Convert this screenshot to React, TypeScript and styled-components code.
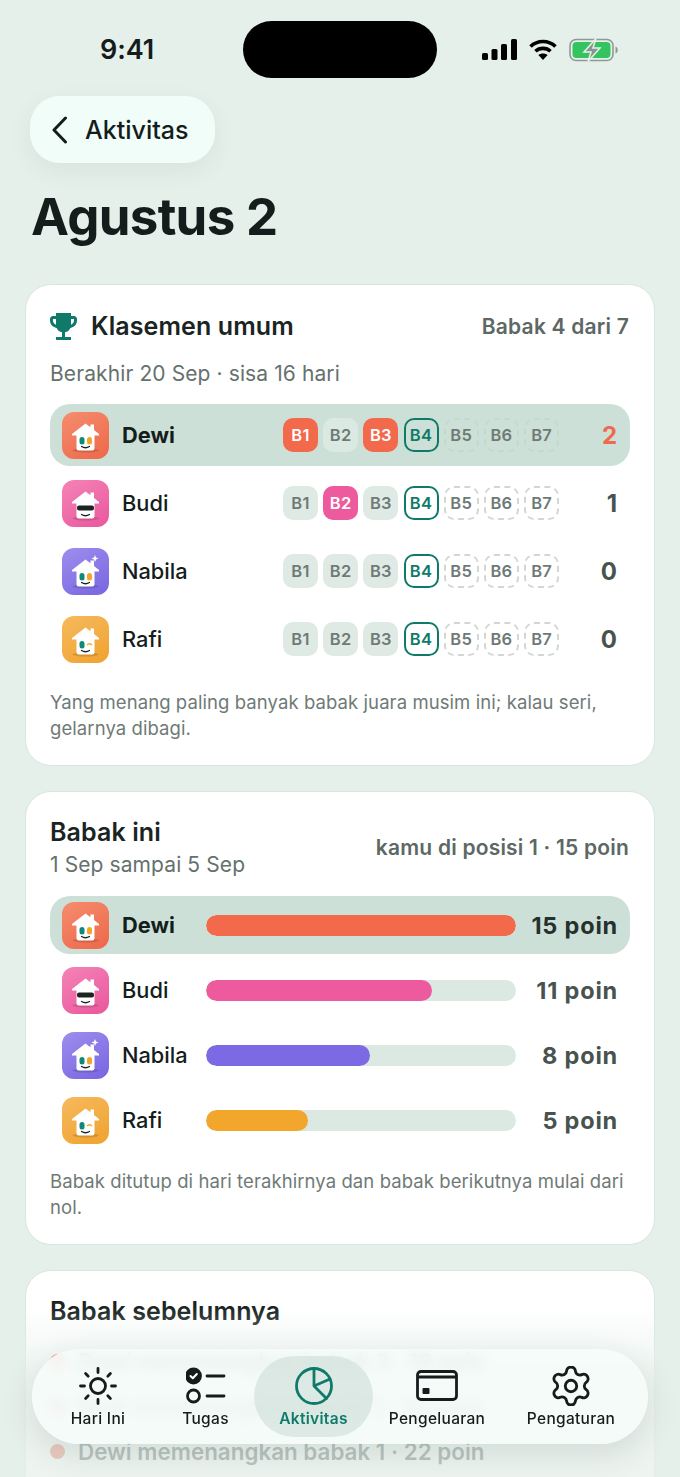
import React from "react";
import styled, { createGlobalStyle } from "styled-components";

const Global = createGlobalStyle`
  html, body { margin: 0; padding: 0; background: #e6f0eb; }
  body { font-family: Inter, "Noto Sans", "Liberation Sans", sans-serif; color: #141d1c; }
  * { box-sizing: border-box; }
`;

const Phone = styled.div`
  position: relative;
  width: 680px;
  height: 1477px;
  overflow: hidden;
  background: #e6f0eb;
`;
const StatusBar = styled.div`
  display: grid;
  grid-template-columns: 243px 194px 243px;
  height: 96px;
  padding-top: 21px;
`;
const Clock = styled.div`
  font-size: 27px;
  font-weight: 600;
  padding-left: 100px;
  line-height: 57px;
  letter-spacing: -0.1px;
`;
const Island = styled.div`
  height: 57px;
  border-radius: 29px;
  background: #000;
`;
const StatusIcons = styled.div`
  display: flex;
  align-items: center;
  gap: 12px;
  height: 57px;
  padding-left: 45px;
`;
const BackPill = styled.div`
  display: inline-flex;
  align-items: center;
  gap: 16px;
  height: 67px;
  margin-left: 30px;
  padding: 0 27px 0 21px;
  border-radius: 30px;
  background: #f1fdf8;
  box-shadow: 0 8px 24px rgba(40, 70, 60, 0.07);
  font-size: 25px;
  font-weight: 500;
`;
const Title = styled.h1`
  margin: 21px 0 0 31px;
  font-size: 51px;
  line-height: 66px;
  font-weight: 700;
  letter-spacing: -0.7px;
  height: 66px;
`;
const Card = styled.section<{ $mt: number; $pt: number; $h?: number }>`
  margin: ${(p) => p.$mt}px 25px 0;
  padding: ${(p) => p.$pt}px 24px 0;
  ${(p) => (p.$h ? `height: ${p.$h}px;` : "")}
  background: #fff;
  border: 1px solid #d9e6e0;
  border-radius: 26px;
`;
const HeadRow = styled.div`
  display: flex;
  justify-content: space-between;
  align-items: center;
`;
const HeadLeft = styled.div`
  display: flex;
  align-items: center;
  gap: 14px;
`;
const CardTitle = styled.h2`
  margin: 0;
  font-size: 25px;
  line-height: 32px;
  font-weight: 600;
  letter-spacing: 0.1px;
  color: #1a2423;
`;
const Meta = styled.div<{ $lift?: number }>`
  margin-bottom: ${(p) => p.$lift ?? 0}px;
  padding-right: 1px;
  font-size: 21px;
  font-weight: 600;
  letter-spacing: 0.2px;
  color: #5d6865;
`;
const Sub = styled.div<{ $mt: number }>`
  margin-top: ${(p) => p.$mt}px;
  font-size: 21px;
  line-height: 30px;
  letter-spacing: 0.1px;
  color: #65716d;
`;
const Rows = styled.div<{ $gap: number; $mt: number }>`
  display: flex;
  flex-direction: column;
  gap: ${(p) => p.$gap}px;
  margin-top: ${(p) => p.$mt}px;
`;
const Row = styled.div<{ $me?: boolean; $h: number }>`
  display: flex;
  align-items: center;
  height: ${(p) => p.$h}px;
  padding: 0 13px 0 12px;
  border-radius: 20px;
  background: ${(p) => (p.$me ? "#cde0d7" : "transparent")};
`;
const Name = styled.div<{ $me?: boolean; $w: number }>`
  width: ${(p) => p.$w}px;
  margin-left: 13px;
  flex: none;
  font-size: 21.8px;
  font-weight: ${(p) => (p.$me ? 700 : 500)};
  color: #141d1c;
`;
const Chips = styled.div`
  display: flex;
  gap: 5.2px;
`;
const Chip = styled.div<{ $kind: string; $me?: boolean; $win?: string }>`
  width: 35px;
  height: 34px;
  display: flex;
  align-items: center;
  justify-content: center;
  border-radius: 10px;
  font-size: 16.5px;
  font-weight: 600;
  letter-spacing: 0.3px;
  background: ${(p) =>
    p.$kind === "plain" ? (p.$me ? "#dbe9e3" : "#dfeae5")
    : p.$kind === "win" ? p.$win : "transparent"};
  color: ${(p) =>
    p.$kind === "win" ? "#fff" : p.$kind === "now" ? "#0f7a69" : "#6f7a76"};
  border: ${(p) =>
    p.$kind === "now" ? "2px solid #0f7a69"
    : p.$kind === "todo" ? `2px dashed ${p.$me ? "#c4d8ce" : "#d2d7d4"}` : "none"};
`;
const Score = styled.div<{ $me?: boolean }>`
  margin-left: auto;
  font-size: 24px;
  font-weight: 700;
  color: ${(p) => (p.$me ? "#ee6a4c" : "#48534f")};
`;
const Note = styled.p<{ $mt: number; $mb: number }>`
  margin: ${(p) => p.$mt}px 0 ${(p) => p.$mb}px;
  font-size: 18.5px;
  line-height: 26px;
  letter-spacing: 0.08px;
  color: #6f7a76;
`;
const Track = styled.div`
  width: 310px;
  height: 21px;
  flex: none;
  border-radius: 11px;
  background: #dce9e3;
  overflow: hidden;
`;
const Fill = styled.div<{ $color: string }>`
  height: 100%;
  border-radius: 11px;
  background: ${(p) => p.$color};
`;
const Points = styled.div<{ $me?: boolean }>`
  margin-left: auto;
  margin-right: -1px;
  font-size: 23.5px;
  font-weight: 700;
  letter-spacing: 0.8px;
  color: ${(p) => (p.$me ? "#26302e" : "#48534f")};
`;
const PastRows = styled.div`
  display: flex;
  flex-direction: column;
  gap: 17px;
  margin-top: 20px;
`;
const PastRow = styled.div`
  display: flex;
  align-items: center;
  gap: 13px;
  height: 28px;
  font-size: 22.4px;
  font-weight: 600;
  color: #48534f;
  white-space: nowrap;
`;
const Dot = styled.span<{ $color: string }>`
  width: 15px;
  height: 15px;
  flex: none;
  border-radius: 50%;
  background: ${(p) => p.$color};
`;
const Fade = styled.div`
  position: absolute;
  left: 0;
  right: 0;
  bottom: 0;
  height: 170px;
  pointer-events: none;
  background: linear-gradient(180deg, rgba(230,240,235,0) 0%, rgba(230,240,235,0.7) 40%, rgba(230,240,235,0.72) 100%);
`;
const TabBar = styled.nav`
  position: absolute;
  left: 32px;
  top: 1349px;
  width: 616px;
  height: 95px;
  padding: 7px 7px;
  display: grid;
  grid-template-columns: 118px 97px 119px 128px 140px;
  border-radius: 48px;
  background: rgba(246, 253, 250, 0.8);
  backdrop-filter: blur(6px);
  box-shadow: 0 10px 32px rgba(40, 70, 60, 0.14);
`;
const Tab = styled.div<{ $active?: boolean }>`
  display: flex;
  flex-direction: column;
  align-items: center;
  justify-content: flex-start;
  gap: 3px;
  padding-top: 10px;
  border-radius: 41px;
  background: ${(p) => (p.$active ? "rgba(211, 226, 219, 0.72)" : "transparent")};
  color: ${(p) => (p.$active ? "#0f7a69" : "#141d1c")};
  font-size: 15.5px;
  font-weight: ${(p) => (p.$active ? 600 : 500)};
  letter-spacing: 0.3px;
  line-height: 20px;
  white-space: nowrap;
`;
const AvatarSvg = styled.svg`
  flex: none;
`;

const Signal = () => (
  <svg width="35" height="21" viewBox="0 0 35 21" fill="#000">
    <rect x="0" y="14" width="6" height="7" rx="1.5" /><rect x="9.5" y="10" width="6" height="11" rx="1.5" />
    <rect x="19" y="5" width="6" height="16" rx="1.5" /><rect x="29" y="0" width="6" height="21" rx="1.5" />
  </svg>
);
const Wifi = () => (
  <svg width="28" height="21" viewBox="0 0 28 21" fill="none" stroke="#000" strokeWidth="3.6">
    <path d="M1.5 7.5C8.5 .8 19.5 .8 26.5 7.5" /><path d="M6.5 12.3C10.6 8.4 17.4 8.4 21.5 12.3" />
    <path d="M14 21l-4.6-5c2.6-2 6.6-2 9.2 0z" fill="#000" stroke="none" />
  </svg>
);
const Battery = () => (
  <svg width="49" height="24" viewBox="0 0 49 24">
    <rect x="1" y="1.5" width="43" height="21" rx="6" fill="none" stroke="#8f9a95" strokeWidth="1.6" />
    <rect x="3.5" y="4" width="38" height="16" rx="4" fill="#33c45f" />
    <path d="M46.500 8.500c1.500.5 2.300 2 2.300 3.500s-.8 3-2.300 3.500z" fill="#8f9a95" />
    <path d="M27 0.500L15 14h7l-3 9.500L31 10h-7z" fill="#8b9590" stroke="#e6f0eb" strokeWidth="1.500" />
  </svg>
);
const Chevron = () => (
  <svg width="18" height="28" viewBox="0 0 18 28" fill="none" stroke="#141d1c" strokeWidth="3" strokeLinecap="round" strokeLinejoin="round">
    <path d="M14.500 2L3 14l11.500 12" />
  </svg>
);
const Trophy = () => (
  <svg width="27" height="27" viewBox="3 3 18 18" fill="#0f7a69">
    <path d="M19 5h-2V3H7v2H5c-1.100 0-2 .9-2 2v1c0 2.550 1.920 4.630 4.390 4.940.63 1.500 1.980 2.630 3.610 2.960V19H7v2h10v-2h-4v-3.100c1.630-.33 2.980-1.460 3.610-2.960C19.080 12.630 21 10.550 21 8V7c0-1.100-.9-2-2-2zM5 8V7h2v3.820C5.840 10.400 5 9.300 5 8zm14 0c0 1.300-.84 2.400-2 2.820V7h2v1z" />
  </svg>
);

type Person = { name: string; c1: string; c2: string; c: string; face: "plain" | "shades" | "spark" | "wink"; bar: number };
const people: Record<string, Person> = {
  Dewi: { name: "Dewi", c1: "#f58a6c", c2: "#ee6a4c", c: "#f2694c", face: "plain", bar: 100 },
  Budi: { name: "Budi", c1: "#f480b5", c2: "#ea5a9e", c: "#ed5b9e", face: "shades", bar: 73 },
  Nabila: { name: "Nabila", c1: "#9b8bec", c2: "#7a68e2", c: "#7c6ae5", face: "spark", bar: 53 },
  Rafi: { name: "Rafi", c1: "#f6b85a", c2: "#f0a432", c: "#f2a62b", face: "wink", bar: 33 },
};
const Avatar = ({ p, uid }: { p: Person; uid: string }) => {
  const id = "g" + p.name + uid;
  return (
    <AvatarSvg width="47" height="47" viewBox="0 0 47 47">
      <defs>
        <linearGradient id={id} x1="0.2" y1="0" x2="0.8" y2="1">
          <stop offset="0" stopColor={p.c1} /><stop offset="1" stopColor={p.c2} />
        </linearGradient>
      </defs>
      <rect width="47" height="47" rx="12" fill={`url(#${id})`} />
      <ellipse cx="23.500" cy="38.500" rx="13" ry="2" fill="#000" opacity="0.13" />
      <path d="M10 22L23.500 11.500l5 3.800V12.500h3.500v5.500L37 22v1.500H32.500v12.500a2.500 2.500 0 0 1-2.500 2.500H17a2.500 2.500 0 0 1-2.500-2.500V23.500H10z" fill="#fff" />
      {p.face === "shades" ? (
        <rect x="15" y="25.500" width="17" height="5" rx="2" fill="#1c2422" />
      ) : p.face === "wink" ? (
        <>
          <rect x="17.500" y="25" width="5" height="7.500" rx="2.500" fill="#0f8a78" />
          <path d="M25 29q2.500-2.500 5 0" stroke="#f2a62b" strokeWidth="1.500" fill="none" />
        </>
      ) : (
        <>
          <rect x="17.500" y="25" width="5" height="7.500" rx="2.500" fill="#0f8a78" />
          <rect x="25" y="25" width="5" height="7.500" rx="2.500" fill="#f2a62b" />
        </>
      )}
      <path d="M19.500 34.500q4 2.500 8 0" stroke="#1c2422" strokeWidth="1.300" fill="none" strokeLinecap="round" />
      {p.face === "spark" && <path d="M33 7l1 2.500 2.500 1-2.500 1-1 2.500-1-2.500-2.500-1 2.500-1z" fill="#fff" />}
    </AvatarSvg>
  );
};

const Sun = () => (
  <svg width="40" height="40" viewBox="0 0 40 40" fill="none" stroke="#141d1c" strokeWidth="2.800" strokeLinecap="round">
    <circle cx="20" cy="20" r="7.500" />
    <path d="M20 2.500v4M20 33.500v4M2.500 20h4M33.500 20h4M7.600 7.600l2.600 2.600M29.800 29.800l2.600 2.600M7.600 32.400l2.600-2.600M29.800 10.200l2.600-2.600" />
  </svg>
);
const Check = () => (
  <svg width="40" height="40" viewBox="0 0 40 40" fill="none" stroke="#141d1c" strokeWidth="2.800" strokeLinecap="round">
    <circle cx="7.500" cy="10" r="7" fill="#141d1c" />
    <path d="M4.500 10l2.300 2.300 4-4.300" stroke="#fff" strokeWidth="2" strokeLinejoin="round" />
    <circle cx="7.500" cy="30" r="6" />
    <path d="M21 10h17M21 30h17" />
  </svg>
);
const Pie = () => (
  <svg width="40" height="40" viewBox="0 0 40 40" fill="none" stroke="#0f7a69" strokeWidth="2.800" strokeLinecap="round" strokeLinejoin="round">
    <circle cx="20" cy="20" r="17.500" />
    <path d="M20 2.500v17.500l12.500 12.500M20 20l16-7" />
  </svg>
);
const CardIcon = () => (
  <svg width="42" height="40" viewBox="0 0 42 40" fill="none" stroke="#141d1c" strokeWidth="2.800" strokeLinejoin="round">
    <rect x="1.500" y="5.500" width="39" height="28" rx="3.500" />
    <path d="M1.500 11h39" />
    <rect x="6.500" y="22" width="7" height="6" rx="1" fill="#141d1c" stroke="none" />
  </svg>
);
const Gear = () => (
  <svg width="40" height="40" viewBox="1.500 1.500 21 21" fill="none" stroke="#141d1c" strokeWidth="1.500" strokeLinecap="round" strokeLinejoin="round">
    <path d="M9.671 4.136a2.340 2.340 0 0 1 4.659 0 2.340 2.340 0 0 0 3.319 1.915 2.340 2.340 0 0 1 2.330 4.033 2.340 2.340 0 0 0 0 3.831 2.340 2.340 0 0 1-2.330 4.033 2.340 2.340 0 0 0-3.319 1.915 2.340 2.340 0 0 1-4.659 0 2.340 2.340 0 0 0-3.320-1.915 2.340 2.340 0 0 1-2.330-4.033 2.340 2.340 0 0 0 0-3.831A2.340 2.340 0 0 1 6.350 6.051a2.340 2.340 0 0 0 3.319-1.915" />
    <circle cx="12" cy="12" r="3" />
  </svg>
);

const order = ["Dewi", "Budi", "Nabila", "Rafi"];
const scores: Record<string, number> = { Dewi: 2, Budi: 1, Nabila: 0, Rafi: 0 };
const wins: Record<string, number[]> = { Dewi: [1, 3], Budi: [2], Nabila: [], Rafi: [] };
const points: Record<string, number> = { Dewi: 15, Budi: 11, Nabila: 8, Rafi: 5 };
const rounds = [1, 2, 3, 4, 5, 6, 7];

export default function App() {
  return (
    <Phone>
      <Global />
      <StatusBar>
        <Clock>9:41</Clock>
        <Island />
        <StatusIcons><Signal /><Wifi /><Battery /></StatusIcons>
      </StatusBar>
      <BackPill><Chevron />Aktivitas</BackPill>
      <Title>Agustus 2</Title>

      <Card $mt={34} $pt={25}>
        <HeadRow>
          <HeadLeft><Trophy /><CardTitle>Klasemen umum</CardTitle></HeadLeft>
          <Meta>Babak 4 dari 7</Meta>
        </HeadRow>
        <Sub $mt={17}>Berakhir 20 Sep · sisa 16 hari</Sub>
        <Rows $gap={6} $mt={15}>
          {order.map((n) => {
            const me = n === "Dewi";
            const p = people[n];
            return (
              <Row key={n} $me={me} $h={62}>
                <Avatar p={p} uid="a" />
                <Name $me={me} $w={161}>{n}</Name>
                <Chips>
                  {rounds.map((r) => (
                    <Chip key={r} $me={me} $win={p.c} $kind={wins[n].includes(r) ? "win" : r === 4 ? "now" : r > 4 ? "todo" : "plain"}>B{r}</Chip>
                  ))}
                </Chips>
                <Score $me={me}>{scores[n]}</Score>
              </Row>
            );
          })}
        </Rows>
        <Note $mt={19} $mb={24}>Yang menang paling banyak babak juara musim ini; kalau seri, gelarnya dibagi.</Note>
      </Card>

      <Card $mt={25} $pt={24}>
        <HeadRow>
          <div>
            <CardTitle>Babak ini</CardTitle>
            <Sub $mt={2}>1 Sep sampai 5 Sep</Sub>
          </div>
          <Meta $lift={2}>kamu di posisi 1 · 15 poin</Meta>
        </HeadRow>
        <Rows $gap={7} $mt={16}>
          {order.map((n) => {
            const me = n === "Dewi";
            const p = people[n];
            return (
              <Row key={n} $me={me} $h={58}>
                <Avatar p={p} uid="b" />
                <Name $me={me} $w={84}>{n}</Name>
                <Track><Fill $color={p.c} style={{ width: `${p.bar}%` }} /></Track>
                <Points $me={me}>{points[n]} poin</Points>
              </Row>
            );
          })}
        </Rows>
        <Note $mt={19} $mb={24}>Babak ditutup di hari terakhirnya dan babak berikutnya mulai dari nol.</Note>
      </Card>

      <Card $mt={25} $pt={24} $h={300}>
        <CardTitle>Babak sebelumnya</CardTitle>
        <PastRows>
          <PastRow><Dot $color={people.Dewi.c} />Dewi memenangkan babak 3 · 19 poin</PastRow>
          <PastRow><Dot $color={people.Budi.c} />Budi memenangkan babak 2 · 24 poin</PastRow>
          <PastRow><Dot $color={people.Dewi.c} />Dewi memenangkan babak 1 · 22 poin</PastRow>
        </PastRows>
      </Card>

      <Fade />
      <TabBar>
        <Tab><Sun />Hari Ini</Tab>
        <Tab><Check />Tugas</Tab>
        <Tab $active><Pie />Aktivitas</Tab>
        <Tab><CardIcon />Pengeluaran</Tab>
        <Tab><Gear />Pengaturan</Tab>
      </TabBar>
    </Phone>
  );
}
